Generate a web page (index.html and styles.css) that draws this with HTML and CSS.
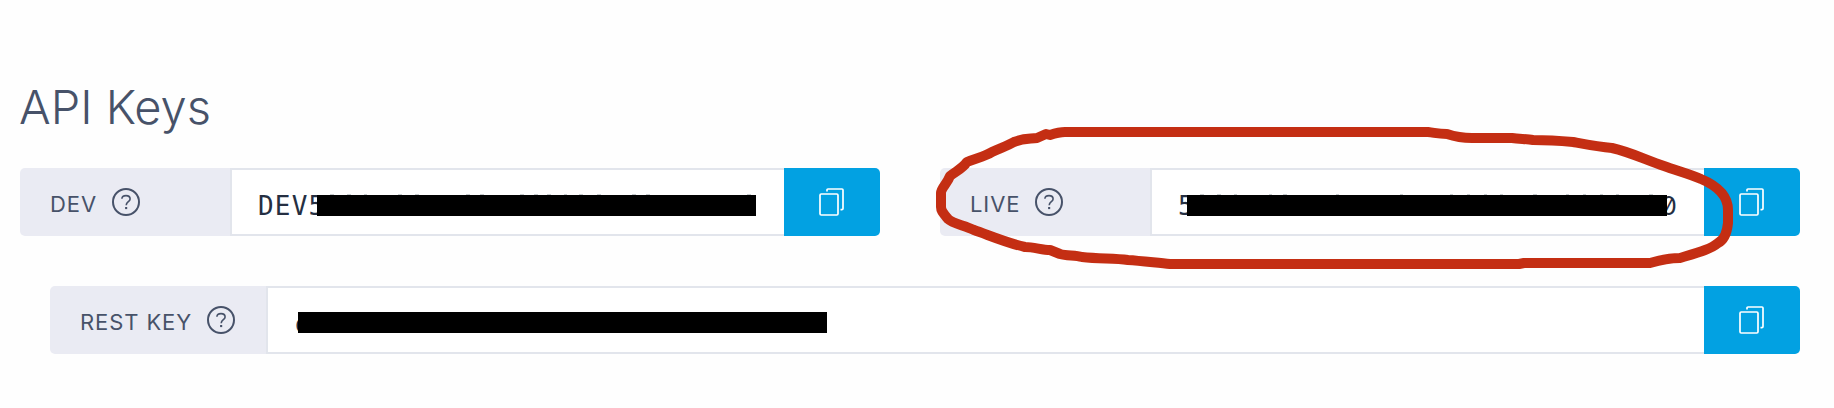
FILE: index.html
```html
<!DOCTYPE html>
<html lang="en">
<head>
<meta charset="utf-8">
<title>API Keys</title>
<link rel="stylesheet" href="styles.css">
</head>
<body>
<svg class="defs" width="0" height="0">
  <symbol id="help" viewBox="0 0 28 28"><circle cx="14" cy="14" r="13" fill="none" stroke="currentColor" stroke-width="2"/><path d="M9.9 10.8C10 8.7 11.6 7.6 14 7.6S18.1 9 18.1 11C18.1 13.7 14.2 13.8 14.2 17.2" fill="none" stroke="currentColor" stroke-width="1.6"/><rect x="13.1" y="19" width="2.1" height="2.1" fill="currentColor"/></symbol>
  <symbol id="copy" viewBox="0 0 26 28"><rect x="1" y="6" width="18" height="21" rx="1.2" fill="none" stroke="currentColor" stroke-width="1.7"/><path d="M8 3.5V2Q8 1 9 1H23Q24 1 24 2V20.5Q24 21.7 22.8 21.7H21.5" fill="none" stroke="currentColor" stroke-width="1.7"/></symbol>
</svg>
<main class="page">
  <h1 class="title">API Keys</h1>
  <div class="row">
    <section class="key key-dev">
      <div class="key-label"><span>DEV</span><svg class="help"><use href="#help"/></svg></div>
      <div class="key-value"><span class="code">DEV5</span><span class="redaction"></span></div>
      <button class="copy" aria-label="Copy"><svg class="copy-icon"><use href="#copy"/></svg></button>
    </section>
    <section class="key key-live">
      <div class="key-label"><span>LIVE</span><svg class="help"><use href="#help"/></svg></div>
      <div class="key-value"><span class="code">5</span><span class="redaction"></span><span class="code last">0</span></div>
      <button class="copy" aria-label="Copy"><svg class="copy-icon"><use href="#copy"/></svg></button>
    </section>
  </div>
  <section class="key key-rest">
    <div class="key-label"><span>REST KEY</span><svg class="help"><use href="#help"/></svg></div>
    <div class="key-value"><span class="code">c</span><span class="redaction"></span></div>
    <button class="copy" aria-label="Copy"><svg class="copy-icon"><use href="#copy"/></svg></button>
  </section>
</main>
<svg class="annotation" viewBox="0 0 1834 408">
  <path class="specks" d="M330 194.500H334M347 194.500H351M364 194.500H367M398 194.500H402M415 194.500H419M466 194.500H470M480 194.500H484M520 194.500H524M534 194.500H538M547 194.500H551M564 194.500H567M579 194.500H583M597 194.500H601M632 194.500H636M646 194.500H650M747 194.500H751M1200 194.500H1204M1217 194.500H1221M1234 194.500H1237M1269 194.500H1272M1283 194.500H1287M1336 194.500H1339M1400 194.500H1403M1450 194.500H1453M1467 194.500H1470M1484 194.500H1487M1500 194.500H1503M1533 194.500H1537M1566 194.500H1569M1583 194.500H1586M1600 194.500H1603M1616 194.500H1619M1649 194.500H1653"/>
  <path class="circle" d="M1065 132H1428C1436 133 1438 134 1447 134C1456 137 1462 138 1472 138H1512C1520 139 1527 139 1533 140C1550 140 1562 141 1573 142C1589 145 1599 147 1612 148C1630 152 1646 160 1664 166C1678 171 1690 174 1701 179C1720 187 1728 198 1728 210V223C1727 233 1724 240 1718 243C1711 249 1700 252 1680 258C1670 258 1660 260 1650 263H1524L1519 264H1170C1158 263 1142 261 1128 260C1114 258 1100 259 1082 257C1075 255 1067 256 1060 254L1050 250C1042 250 1034 247 1025 247C1007 243 991 236 974 230C964 225 953 224 948 219C943 213 941 211 941 207V193C941 188 947 184 950 176C956 171 962 169 967 162C976 158 984 157 992 152C1000 148 1007 146 1014 142C1024 138 1029 139 1037 138L1046 134L1050 135C1056 133 1060 132 1065 132Z"/>
</svg>
</body>
</html>
```
FILE: styles.css
```css
* { box-sizing: border-box; }
body { margin: 0; background: #fefefe; color: #475269; font-family: Inter, sans-serif; }
.defs { display: block; height: 0; }
.page { height: 408px; padding: 77px 34px 0 19px; }
.title { margin: 0 0 31px; height: 60px; line-height: 60px; font-size: 47px; font-weight: 300; letter-spacing: 0; }
.row { display: grid; grid-template-columns: 1fr 1fr; gap: 60px; margin-left: 1px; }
.key { display: flex; height: 68px; }
.key-rest { margin: 50px 0 0 31px; }
.key-label { display: flex; align-items: center; width: 210px; padding-left: 30px; gap: 15px; background: #eaebf3; border-radius: 5px 0 0 5px; font-size: 22px; font-weight: 400; letter-spacing: 0.9px; }
.key-label span { position: relative; top: 2px; }
.key-rest .key-label { width: 216px; }
.help { width: 28px; height: 28px; }
.key-value { flex: 1; display: flex; align-items: center; border: 2px solid #e2e5ec; border-right: 0; background: #fff; padding-left: 26px; white-space: nowrap; }
.code { flex: none; width: 59px; color: #252f42; font: 26px/34px "DejaVu Sans Mono", monospace; letter-spacing: 1.2px; position: relative; top: 4px; }
.key-live .code { width: 9px; }
.key-rest .code { width: 4px; }
.key-live .code.last { display: flex; justify-content: flex-end; width: 10px; font-family: Inter, sans-serif; font-size: 26px; font-feature-settings: "zero"; letter-spacing: 0; }
.redaction { flex: none; height: 21px; background: #000; position: relative; z-index: 1; top: 3px; }
.key-dev .redaction { width: 439px; }
.key-live .redaction { width: 480px; }
.key-rest .redaction { width: 529px; top: 2px; }
.copy { width: 96px; padding: 0; border: 0; border-radius: 0 5px 5px 0; background: #02a1e2; color: #fff; display: flex; align-items: center; justify-content: center; }
.copy-icon { width: 26px; height: 28px; }
.annotation { position: absolute; inset: 0; z-index: 2; width: 1834px; height: 408px; pointer-events: none; }
.specks { stroke: #c6cbce; stroke-width: 1; }
.circle { fill: none; stroke: #c42e13; stroke-width: 10; stroke-linejoin: round; }
```
